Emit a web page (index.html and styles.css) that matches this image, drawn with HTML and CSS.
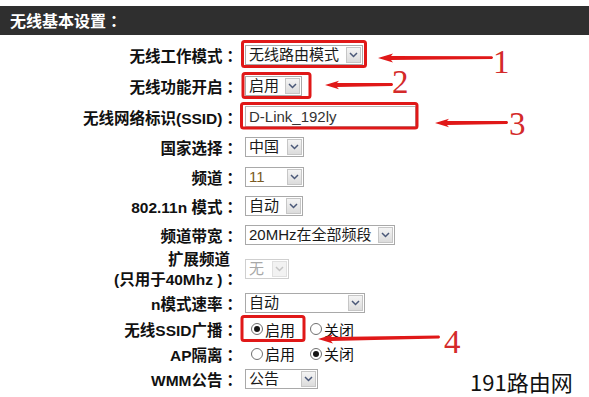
FILE: index.html
```html
<!DOCTYPE html>
<html lang="zh-CN">
<head>
  <meta charset="UTF-8" />
  <meta name="viewport" content="width=device-width, initial-scale=1" />
  <title>无线基本设置</title>
  <link rel="stylesheet" href="styles.css">
</head>
<body>

<div class="page">
  <div class="title">无线基本设置<i class="c" lang="zh-TW">：</i></div>

  <div class="form">
    <div class="lbl">无线工作模式<i class="c" lang="zh-TW">：</i></div>
    <div class="fld">
      <span class="sel w118"><span class="val">无线路由模式</span><span class="btn"><svg width="9" height="6" viewBox="0 0 9 6"><path d="M1 1 L4.5 4.5 L8 1" /></svg></span></span>
    </div>

    <div class="lbl">无线功能开启<i class="c" lang="zh-TW">：</i></div>
    <div class="fld">
      <span class="sel w57"><span class="val">启用</span><span class="btn"><svg width="9" height="6" viewBox="0 0 9 6"><path d="M1 1 L4.5 4.5 L8 1" /></svg></span></span>
    </div>

    <div class="lbl">无线网络标识(SSID)<i class="c" lang="zh-TW">：</i></div>
    <div class="fld">
      <span class="inp">D-Link_192ly</span>
    </div>

    <div class="lbl">国家选择<i class="c" lang="zh-TW">：</i></div>
    <div class="fld">
      <span class="sel w59"><span class="val">中国</span><span class="btn"><svg width="9" height="6" viewBox="0 0 9 6"><path d="M1 1 L4.5 4.5 L8 1" /></svg></span></span>
    </div>

    <div class="lbl">频道<i class="c" lang="zh-TW">：</i></div>
    <div class="fld">
      <span class="sel w59"><span class="val num">11</span><span class="btn"><svg width="9" height="6" viewBox="0 0 9 6"><path d="M1 1 L4.5 4.5 L8 1" /></svg></span></span>
    </div>

    <div class="lbl">802.11n 模式<i class="c" lang="zh-TW">：</i></div>
    <div class="fld">
      <span class="sel w58"><span class="val">自动</span><span class="btn"><svg width="9" height="6" viewBox="0 0 9 6"><path d="M1 1 L4.5 4.5 L8 1" /></svg></span></span>
    </div>

    <div class="lbl">频道带宽<i class="c" lang="zh-TW">：</i></div>
    <div class="fld">
      <span class="sel w150"><span class="val">20MHz在全部频段</span><span class="btn"><svg width="9" height="6" viewBox="0 0 9 6"><path d="M1 1 L4.5 4.5 L8 1" /></svg></span></span>
    </div>

    <div class="lbl two"><span class="l1">扩展频道</span><br>(只用于40Mhz )<i class="c" lang="zh-TW">：</i></div>
    <div class="fld">
      <span class="sel w44 off"><span class="val">无</span><span class="btn"><svg width="9" height="6" viewBox="0 0 9 6"><path d="M1 1 L4.5 4.5 L8 1" /></svg></span></span>
    </div>

    <div class="lbl">n模式速率<i class="c" lang="zh-TW">：</i></div>
    <div class="fld">
      <span class="sel w120"><span class="val">自动</span><span class="btn"><svg width="9" height="6" viewBox="0 0 9 6"><path d="M1 1 L4.5 4.5 L8 1" /></svg></span></span>
    </div>

    <div class="lbl">无线SSID广播<i class="c" lang="zh-TW">：</i></div>
    <div class="fld">
      <span class="opt"><span class="radio on"></span>启用</span>
      <span class="opt"><span class="radio"></span>关闭</span>
    </div>

    <div class="lbl">AP隔离<i class="c" lang="zh-TW">：</i></div>
    <div class="fld">
      <span class="opt"><span class="radio"></span>启用</span>
      <span class="opt"><span class="radio on"></span>关闭</span>
    </div>

    <div class="lbl">WMM公告<i class="c" lang="zh-TW">：</i></div>
    <div class="fld">
      <span class="sel w73"><span class="val">公告</span><span class="btn"><svg width="9" height="6" viewBox="0 0 9 6"><path d="M1 1 L4.5 4.5 L8 1" /></svg></span></span>
    </div>
  </div>

  <!-- красные пометки поверх скриншота -->
  <svg class="marks" width="589" height="397" viewBox="0 0 589 397">
    <g class="box">
      <rect x="242.5" y="41.5" width="123" height="25" rx="2" />
      <rect x="243" y="73.5" width="67" height="24" rx="2" />
      <rect x="241.5" y="103.5" width="175.5" height="24.5" rx="2" />
      <rect x="242" y="316.5" width="62" height="24" rx="2" />
    </g>
    <g class="arrow">
      <path d="M378 58 L393 53.5 L391 56 L492 56.2 Q494 57.5 492 59 L391 60 L393 62.5 Z" />
      <path d="M325 85 L339 80.8 L337 83 L392 83 Q394 84.5 392 86 L337 87 L339 89.2 Z" />
      <path d="M435 123 L449 118.8 L447 121 L507 121 Q509 122.5 507 124 L447 125 L449 127.2 Z" />
      <path d="M318 339 L333 334.5 L331 337 L439 335.5 Q441 337 439 338.5 L331 341 L333 343.5 Z" />
    </g>
    <g class="num">
      <text x="493" y="73">1</text>
      <text x="392" y="93">2</text>
      <text x="509" y="135">3</text>
      <text x="444" y="353">4</text>
    </g>
  </svg>

  <div class="brand">191路由网</div>
</div>

</body>
</html>
```

FILE: styles.css
```css
html, body {
  margin: 0; padding: 0;
  overflow: hidden;
  background: #fff;
}
body {
  font-family: "Liberation Sans", "Noto Sans CJK SC", sans-serif;
  color: #111;
}
.page {
  position: relative;
  width: 589px;
  height: 397px;
  padding-top: 6px;
  box-sizing: border-box;
}
.title {
  height: 29px;
  background: #2f2f2f;
  color: #fff;
  font-family: "Noto Sans CJK SC", sans-serif;
  font-size: 16px;
  font-weight: bold;
  line-height: 29px;
  padding-left: 10px;
}
/* full-width colon centred, as in the original page */
.c {
  font-style: normal;
  font-family: "Noto Sans CJK TC", sans-serif;
}
.form {
  display: grid;
  grid-template-columns: 238px 1fr;
  grid-template-rows: 30px 31px 31px 30px 29px 30px 28px 40px 27px 26px 23px 27px;
  column-gap: 7px;
  margin-top: 5px;
  align-items: center;
}
.lbl {
  text-align: right;
  font-size: 15.5px;
  font-weight: bold;
  white-space: nowrap;
}
.lbl.two {
  line-height: 19px;
}
.lbl .l1 {
  margin-right: 8px;
}
.fld {
  display: flex;
  align-items: center;
  font-family: "Liberation Sans", "Noto Sans CJK SC", sans-serif;
  font-size: 15px;
}

/* select */
.sel {
  display: inline-flex;
  align-items: center;
  height: 20px;
  box-sizing: border-box;
  border: 1px solid #a9a9a9;
  background: #fff;
}
.sel .val {
  flex: 1;
  padding-left: 3px;
  line-height: 18px;
  color: #1a1a1a;
  white-space: nowrap;
  overflow: hidden;
}
.sel .val.num {
  color: #7a5a22;
}
.sel .btn {
  width: 15px;
  height: 16px;
  margin-right: 1px;
  box-sizing: border-box;
  border: 1px solid #c6c6c6;
  background: linear-gradient(#f4f4f4, #dcdcdc);
  display: flex;
  align-items: center;
  justify-content: center;
  flex-shrink: 0;
}
.sel .btn path {
  fill: none;
  stroke: #4a5878;
  stroke-width: 1.5;
}
.sel.off {
  border-color: #cfcfcf;
}
.sel.off .val {
  color: #a8a8a8;
}
.sel.off .btn {
  border-color: #e0e0e0;
  background: #f2f2f2;
}
.sel.off .btn path {
  stroke: #c4c4c4;
}
.w44 { width: 44px; }
.w57 { width: 57px; }
.w58 { width: 58px; }
.w59 { width: 59px; }
.w73 { width: 73px; }
.w118 { width: 118px; }
.w120 { width: 120px; }
.w150 { width: 150px; }

/* text input */
.inp {
  width: 171px;
  height: 21px;
  box-sizing: border-box;
  border: 1px solid #b5b5b5;
  padding-left: 3px;
  line-height: 19px;
  color: #333;
}

/* radio */
.opt {
  display: inline-flex;
  align-items: center;
  gap: 2px;
  margin-left: 6px;
}
.opt + .opt {
  margin-left: 15px;
}
.radio {
  width: 12px;
  height: 12px;
  box-sizing: border-box;
  border: 1px solid #707070;
  border-radius: 50%;
  background: #fff;
  display: flex;
  align-items: center;
  justify-content: center;
}
.radio.on::after {
  content: "";
  width: 6px;
  height: 6px;
  border-radius: 50%;
  background: #151515;
}

/* overlay */
.marks {
  position: absolute;
  left: 0; top: 0;
}
.marks .box rect {
  fill: none;
  stroke: #e01818;
  stroke-width: 3;
}
.marks .arrow path {
  fill: #e01818;
}
.marks .num text {
  font-family: "Liberation Serif", serif;
  font-size: 33px;
  fill: #d42a2a;
}
.brand {
  position: absolute;
  left: 470px;
  top: 365px;
  font-family: "Noto Sans CJK SC", sans-serif;
  font-size: 22px;
  color: #111;
}
```
